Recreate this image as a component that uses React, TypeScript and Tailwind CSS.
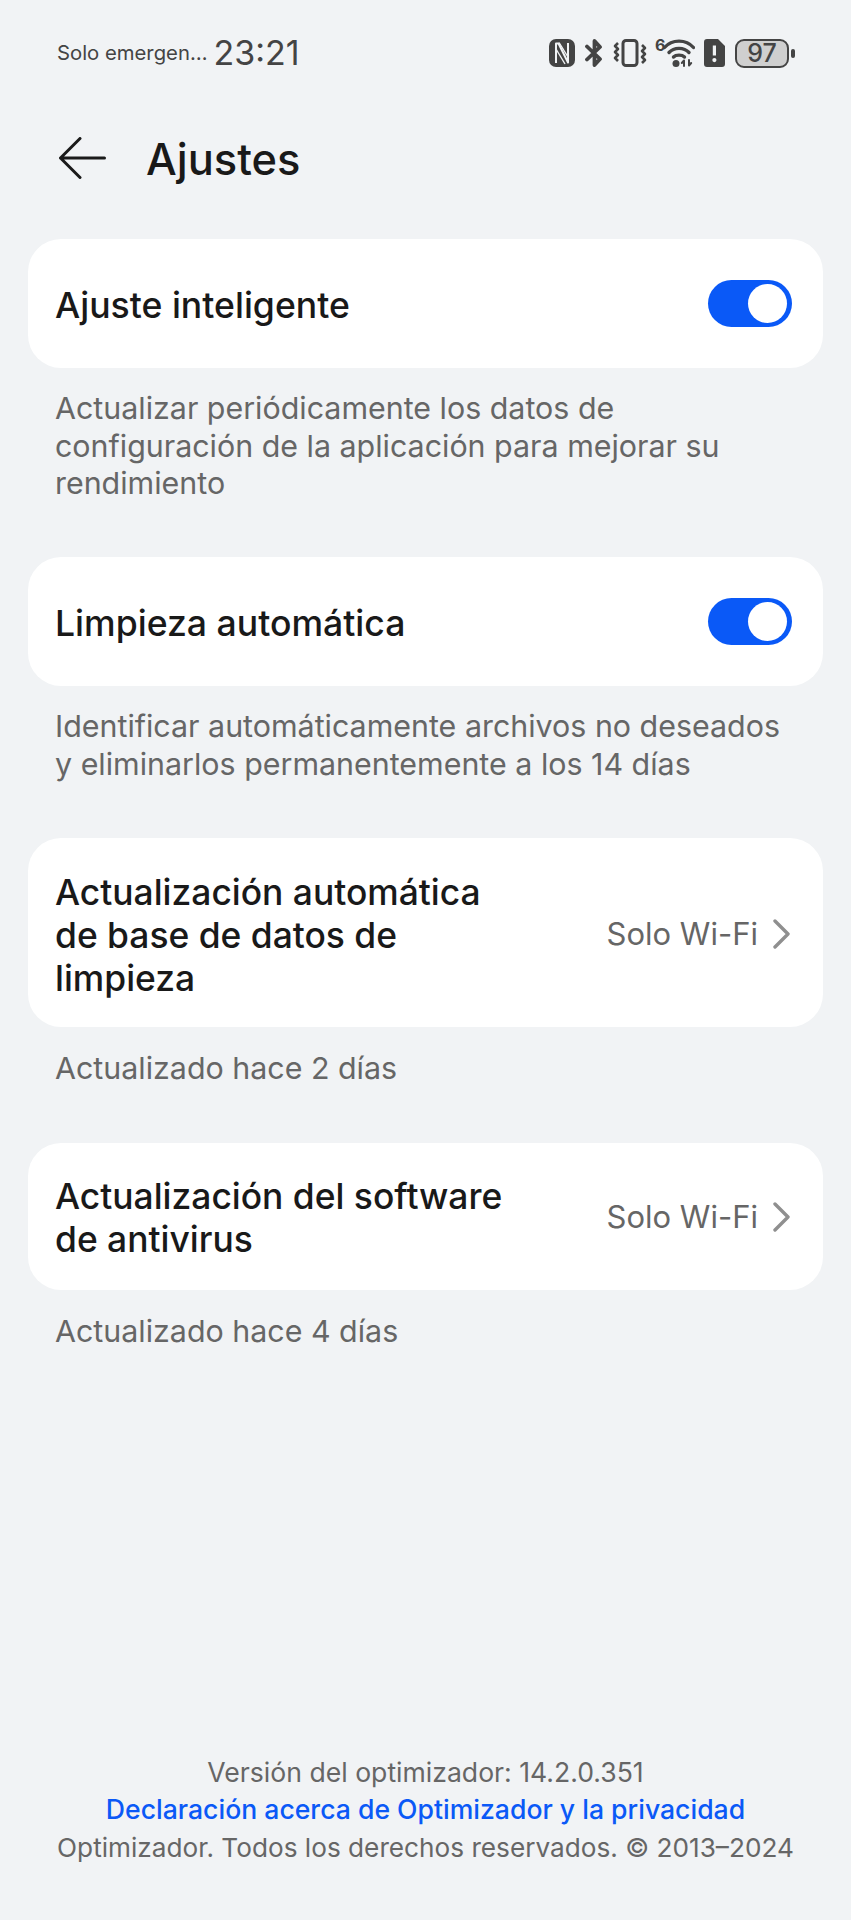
import React from "react";

const Toggle = () => (
  <div className="w-[84px] h-[47px] rounded-full bg-[#0a59f7] flex items-center justify-end pr-[5px] shrink-0">
    <div className="w-[39px] h-[39px] rounded-full bg-white" />
  </div>
);

const Chevron = () => (
  <svg width="17" height="30" viewBox="0 0 17 30" fill="none" className="shrink-0">
    <path d="M2 2 L15 15 L2 28" stroke="#8f8f8f" strokeWidth="3.400" strokeLinecap="round" strokeLinejoin="round" />
  </svg>
);

// NFC mark: dark tile with the light N line across it
const Nfc = () => (
  <svg width="26" height="28" viewBox="0 0 26 28" fill="none">
    <rect width="26" height="28" rx="7" fill="#444" />
    <path d="M7 24V4.500H9.500L19 23.500V4" stroke="#f1f3f5" strokeWidth="2" strokeLinejoin="round" />
    <path d="M7 10L16 25" stroke="#f1f3f5" strokeWidth="1.400" />
    <path d="M10 3.500L19 18" stroke="#f1f3f5" strokeWidth="1.400" />
  </svg>
);

const Bluetooth = () => (
  <svg width="18" height="28" viewBox="0 0 18 28" fill="none">
    <path d="M2 7.500L15 20L9.500 26V2L15 8L2 20.500" stroke="#444" strokeWidth="3.800" strokeLinejoin="round" strokeLinecap="round" />
  </svg>
);

const Vibrate = () => (
  <svg width="34" height="28" viewBox="0 0 34 28" fill="none" stroke="#444">
    <rect x="10" y="1.500" width="14" height="25" rx="3" strokeWidth="3" />
    <path d="M5 4L2 7L5 10L2 13L5 16L2 19L5 22" strokeWidth="2.600" strokeLinejoin="round" />
    <path d="M29 6L32 9L29 12L32 15L29 18L32 21L29 24" strokeWidth="2.600" strokeLinejoin="round" />
  </svg>
);

const Wifi = () => (
  <svg width="32" height="28" viewBox="0 0 32 28" fill="none" stroke="#444" strokeLinecap="round">
    <path d="M1.500 8.500C9 0 23 0 30.500 8.500" strokeWidth="3.400" />
    <path d="M6 13.500C11 8 21 8 26 13.500" strokeWidth="3.400" />
    <path d="M10.500 18C13 15.500 19 15.500 21.500 18" strokeWidth="3.400" />
    <circle cx="13" cy="24.500" r="3.500" fill="#444" stroke="none" />
    <path d="M21 27V21.500L18.800 24M26 21V26.500L28.200 24" strokeWidth="2" strokeLinejoin="round" />
  </svg>
);

const SimAlert = () => (
  <svg width="21" height="28" viewBox="0 0 21 28">
    <path fill="#444" fillRule="evenodd" d="M3 0h11l7 7v18a3 3 0 0 1-3 3H3a3 3 0 0 1-3-3V3a3 3 0 0 1 3-3zM8.800 6.500V16.500H12V6.500zM10.400 19a2.100 2.100 0 1 0 0 4.200a2.100 2.100 0 0 0 0-4.200z" />
  </svg>
);

const StatusBar = () => (
  <div className="h-[106px] flex items-center justify-between pl-[57px] pr-[56px]">
    <div className="flex items-center gap-[6px] text-[#444]">
      <span className="text-[20.300px]">Solo emergen…</span>
      <span className="text-[34px] leading-none">23:21</span>
    </div>
    <div className="flex items-center">
      <Nfc />
      <div className="w-[10px]" />
      <Bluetooth />
      <div className="w-[10px]" />
      <Vibrate />
      <div className="w-[8px]" />
      <span className="text-[16px] font-bold text-[#444] leading-none self-start mt-[-2px] w-[8px]">6</span>
      <Wifi />
      <div className="w-[9px]" />
      <SimAlert />
      <div className="w-[10px]" />
      <div className="w-[54px] h-[29px] rounded-[9px] border-[2px] border-[#444] bg-[#cfcfcf] flex items-center justify-center text-[25px] font-medium text-[#444] leading-none">
        97
      </div>
      <div className="w-[4px] h-[9px] rounded-full bg-[#444] ml-[2px]" />
    </div>
  </div>
);

const Header = () => (
  <div className="h-[103px] flex items-center pl-[59px]">
    <svg width="47" height="42" viewBox="0 0 47 42" fill="none" className="shrink-0">
      <path d="M21 1.500L1.500 21L21 40.500M1.500 21H45.500" stroke="#1a1a1a" strokeWidth="3" strokeLinecap="round" strokeLinejoin="round" />
    </svg>
    <h1 className="ml-[40px] mt-[4px] text-[43.400px] font-medium text-[#191919] leading-none">Ajustes</h1>
  </div>
);

const Note = ({ children, className }: { children: React.ReactNode; className: string }) => (
  <p className={`px-[27px] text-[30.400px] leading-[37.500px] text-[#666] ${className}`}>{children}</p>
);

const ToggleCard = ({ title }: { title: string }) => (
  <div className="h-[129px] rounded-[33px] bg-white flex items-center justify-between pl-[27px] pr-[31px]">
    <span className="pt-[4px] text-[35.600px] font-medium text-[#191919]">{title}</span>
    <Toggle />
  </div>
);

const LinkCard = ({ lines, height, titlePad, valuePad }: { lines: string[]; height: string; titlePad: string; valuePad: string }) => (
  <div className={`${height} rounded-[33px] bg-white flex items-center justify-between pl-[27px] pr-[33px]`}>
    <div className={`${titlePad} text-[35.400px] font-medium leading-[43px] text-[#191919]`}>
      {lines.map((l) => (
        <div key={l}>{l}</div>
      ))}
    </div>
    <div className={`${valuePad} flex items-center gap-[15px]`}>
      <span className="text-[31px] text-[#666]">Solo Wi-Fi</span>
      <Chevron />
    </div>
  </div>
);

export default function App() {
  return (
    <div className="min-h-[1920px] w-[851px] bg-[#f1f3f5] flex flex-col font-['Inter',sans-serif]">
      <StatusBar />
      <Header />
      <div className="mt-[30px] px-[28px] flex flex-col">
        <ToggleCard title="Ajuste inteligente" />
        <Note className="mt-[22px] mb-[54.500px]">
          Actualizar periódicamente los datos de configuración de la aplicación para mejorar su rendimiento
        </Note>
        <ToggleCard title="Limpieza automática" />
        <Note className="mt-[22px] mb-[55px]">
          Identificar automáticamente archivos no deseados y eliminarlos permanentemente a los 14 días
        </Note>
        <LinkCard
          height="h-[189px]"
          titlePad="pt-[5px]"
          valuePad="pt-[3px]"
          lines={["Actualización automática", "de base de datos de", "limpieza"]}
        />
        <Note className="mt-[23px] mb-[55.500px]">Actualizado hace 2 días</Note>
        <LinkCard
          height="h-[147px]"
          titlePad="pt-[2px]"
          valuePad="pt-[1px]"
          lines={["Actualización del software", "de antivirus"]}
        />
        <Note className="mt-[23px]">Actualizado hace 4 días</Note>
      </div>
      <div className="mt-auto pb-[54px] text-center text-[26.600px] leading-[37.500px] text-[#666]">
        <div>Versión del optimizador: 14.2.0.351</div>
        <div className="text-[#0a59f7] font-medium">Declaración acerca de Optimizador y la privacidad</div>
        <div className="text-[26.200px]">Optimizador. Todos los derechos reservados. © 2013–2024</div>
      </div>
    </div>
  );
}
